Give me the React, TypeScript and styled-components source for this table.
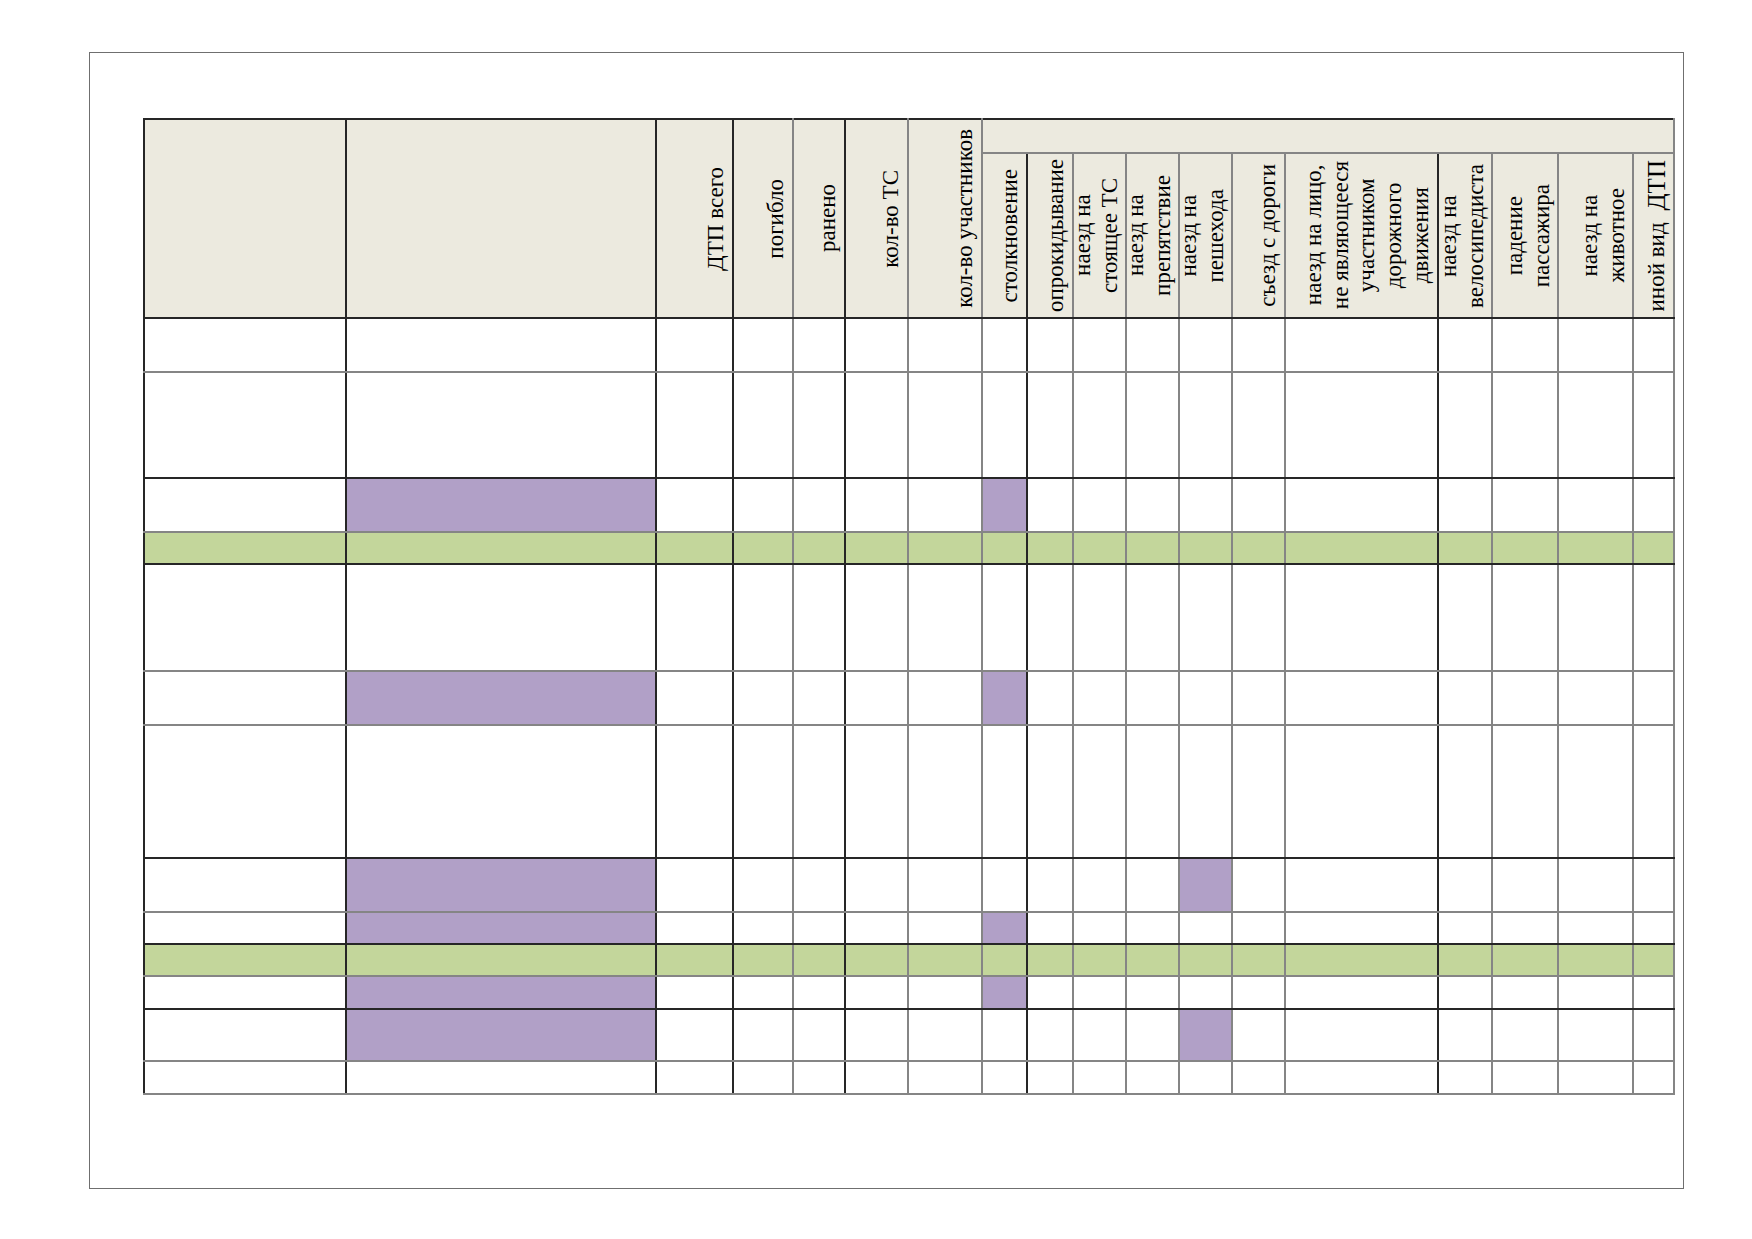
import React from "react";
import styled, { createGlobalStyle } from "styled-components";

const DARK = "#262626";
const GRAY = "#858585";

const GlobalStyle = createGlobalStyle`
  html, body {
    margin: 0;
    padding: 0;
    background: #ffffff;
  }
  body {
    font-family: "Liberation Serif", "Times New Roman", serif;
    color: #000000;
  }
`;

const Page = styled.div`
  width: 1752px;
  height: 1239px;
  padding: 52px 0 0 89px;
  box-sizing: border-box;
`;

const Frame = styled.div`
  width: 1595px;
  height: 1137px;
  box-sizing: border-box;
  border: 1px solid #6f6f6f;
  padding: 65px 0 0 53px;
`;

const Table = styled.table`
  border-collapse: collapse;
  table-layout: fixed;
  width: 1532px;
`;

const Col = styled.col<{ $w: number }>`
  width: ${(p) => p.$w}px;
`;

const Row = styled.tr<{ $h: number }>`
  height: ${(p) => p.$h}px;
`;

const HeadCell = styled.th<{ $right: string; $bottom: string }>`
  background: #eceadf;
  border: 2px solid ${DARK};
  border-right-color: ${(p) => p.$right};
  border-bottom-color: ${(p) => p.$bottom};
  padding: 0 2px 0 0;
  vertical-align: middle;
  font-weight: normal;
`;

const Cell = styled.td<{ $right: string; $bottom: string; $fill: string }>`
  background: ${(p) => p.$fill};
  border: 2px solid ${DARK};
  border-right-color: ${(p) => p.$right};
  border-bottom-color: ${(p) => p.$bottom};
  padding: 0;
`;

const HeadBox = styled.div`
  display: flex;
  justify-content: flex-end;
  align-items: center;
`;

const Label = styled.div`
  writing-mode: vertical-rl;
  transform: rotate(180deg);
  white-space: nowrap;
  text-align: center;
  font-size: 23px;
  line-height: 26.7px;
`;

const Big = styled.span`
  font-size: 25px;
  margin-top: 12px;
  display: inline-block;
`;

type Column = { w: number; line: string };

const columns: Column[] = [
  { w: 202, line: DARK },
  { w: 310, line: DARK },
  { w: 77, line: DARK },
  { w: 60, line: GRAY },
  { w: 52, line: DARK },
  { w: 63, line: GRAY },
  { w: 74, line: GRAY },
  { w: 45, line: DARK },
  { w: 46, line: GRAY },
  { w: 53, line: GRAY },
  { w: 53, line: GRAY },
  { w: 53, line: GRAY },
  { w: 53, line: GRAY },
  { w: 153, line: DARK },
  { w: 54, line: GRAY },
  { w: 66, line: GRAY },
  { w: 75, line: GRAY },
  { w: 41, line: GRAY },
];

// главные показатели (объединены по двум строкам шапки)
const mainHeads: string[][] = [
  [],
  [],
  ["ДТП всего"],
  ["погибло"],
  ["ранено"],
  ["кол-во ТС"],
  ["кол-во участников"],
];

// виды ДТП
const typeHeads: string[][] = [
  ["столкновение"],
  ["опрокидывание"],
  ["наезд на", "стоящее ТС"],
  ["наезд на", "препятствие"],
  ["наезд на", "пешехода"],
  ["съезд с дороги"],
  ["наезд на лицо,", "не являющееся", "участником", "дорожного", "движения"],
  ["наезд на", "велосипедиста"],
  ["падение", "пассажира"],
  ["наезд на", "животное"],
];

const PURPLE = "#b1a0c7";
const GREEN = "#c3d69b";

type BodyRow = { h: number; line: string; green?: boolean; marks?: number[] };

const rows: BodyRow[] = [
  { h: 54, line: GRAY },
  { h: 106, line: DARK },
  { h: 54, line: GRAY, marks: [1, 7] },
  { h: 32, line: DARK, green: true },
  { h: 107, line: GRAY },
  { h: 54, line: GRAY, marks: [1, 7] },
  { h: 133, line: DARK },
  { h: 54, line: GRAY, marks: [1, 11] },
  { h: 32, line: DARK, marks: [1, 7] },
  { h: 32, line: GRAY, green: true },
  { h: 33, line: DARK, marks: [1, 7] },
  { h: 52, line: GRAY, marks: [1, 11] },
  { h: 33, line: GRAY },
];

function renderLines(lines: string[]) {
  return lines.map((t, i) => (
    <React.Fragment key={i}>
      {i > 0 && <br />}
      {t}
    </React.Fragment>
  ));
}

export default function App() {
  return (
    <>
      <GlobalStyle />
      <Page>
        <Frame>
          <Table>
            <colgroup>
              {columns.map((c, i) => (
                <Col key={i} $w={c.w} />
              ))}
            </colgroup>
            <thead>
              <Row $h={34}>
                {mainHeads.map((lines, i) => (
                  <HeadCell key={i} rowSpan={2} $right={columns[i].line} $bottom={DARK}>
                    {lines.length > 0 && (
                      <HeadBox>
                        <Label>{renderLines(lines)}</Label>
                      </HeadBox>
                    )}
                  </HeadCell>
                ))}
                <HeadCell colSpan={11} $right={GRAY} $bottom={GRAY} />
              </Row>
              <Row $h={165}>
                {typeHeads.map((lines, i) => (
                  <HeadCell key={i} $right={columns[i + 7].line} $bottom={DARK}>
                    <HeadBox>
                      <Label>{renderLines(lines)}</Label>
                    </HeadBox>
                  </HeadCell>
                ))}
                <HeadCell $right={GRAY} $bottom={DARK}>
                  <HeadBox>
                    <Label>
                      иной вид<Big>ДТП</Big>
                    </Label>
                  </HeadBox>
                </HeadCell>
              </Row>
            </thead>
            <tbody>
              {rows.map((r, ri) => (
                <Row key={ri} $h={r.h}>
                  {columns.map((c, ci) => {
                    let fill = "#ffffff";
                    if (r.green) fill = GREEN;
                    else if (r.marks && r.marks.includes(ci)) fill = PURPLE;
                    return <Cell key={ci} $right={c.line} $bottom={r.line} $fill={fill} />;
                  })}
                </Row>
              ))}
            </tbody>
          </Table>
        </Frame>
      </Page>
    </>
  );
}
